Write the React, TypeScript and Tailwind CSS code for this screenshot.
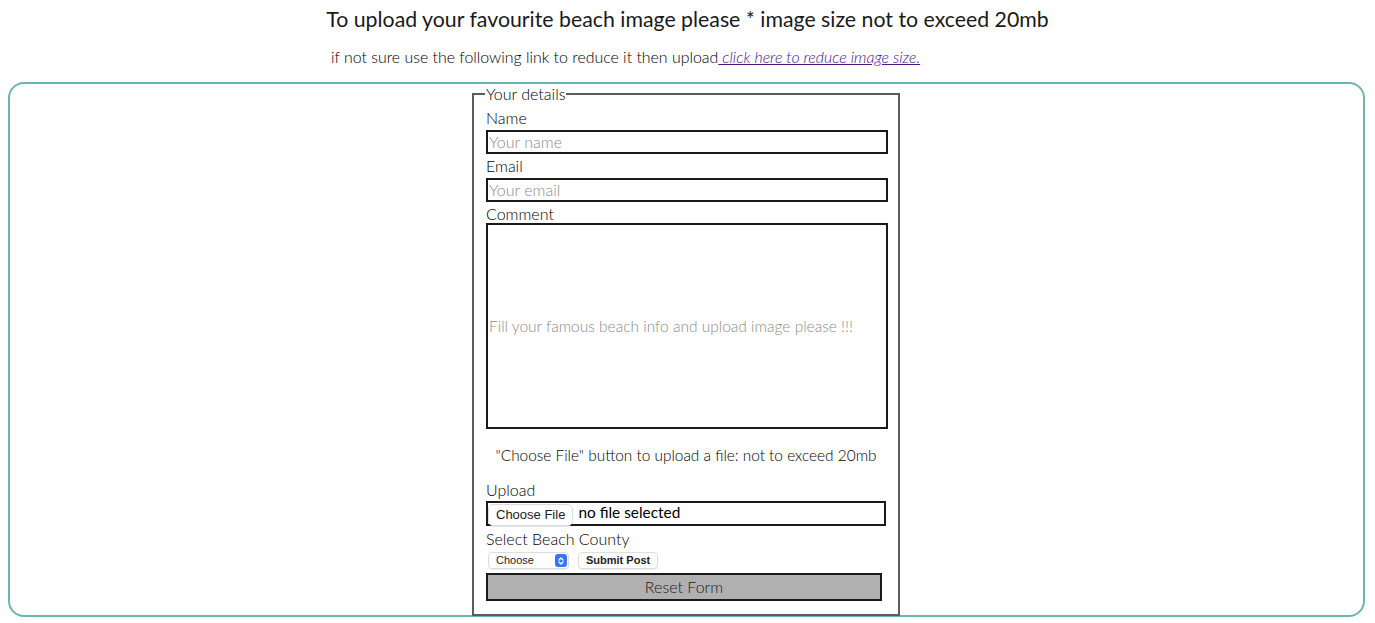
import React from "react";

export default function App() {
  const font = { fontFamily: "Lato, 'Open Sans', sans-serif" };
  const sys = { fontFamily: "'Helvetica Neue', 'Liberation Sans', Arial, sans-serif" };
  return (
    <div className="w-[1375px] h-[623px] bg-white text-[#111] overflow-hidden" style={font}>
      <h1 className="text-[21.3px] leading-[26px] text-center pt-[6px] text-[#1a1a1a]">
        To upload your favourite beach image please * image size not to exceed 20mb
      </h1>
      <p className="text-[15.9px] leading-[20px] font-light mt-[15px] ml-[331px] text-black">
        if not sure use the following link to reduce it then upload
        <a href="#" className="italic underline text-[#4b1583]"> click here to reduce image size.</a>
      </p>
      <div className="ml-[8px] mr-[10px] mt-[15px] h-[535px] border-2 border-[#6fb3b0] rounded-[16px] flex">
        <fieldset className="ml-[462px] w-[428px] h-[531px] mt-[1px] border-2 border-[#5c5c5c] pl-[12px] pr-[10px] font-light text-[16px] text-black">
          <legend className="px-[1px] -ml-[1px] leading-[18px] text-black">Your details</legend>
          <div className="leading-[24px] mt-[3px]">Name</div>
          <input
            placeholder="Your name"
            className="block w-[402px] h-[24px] border-2 border-[#1a1a1a] px-[1px] text-[16px] font-light placeholder:text-[#8c8c8c] outline-none"
          />
          <div className="leading-[24px]">Email</div>
          <input
            placeholder="Your email"
            className="block w-[402px] h-[24px] border-2 border-[#1a1a1a] px-[1px] text-[16px] font-light placeholder:text-[#8c8c8c] outline-none"
          />
          <div className="leading-[24px] -mb-[3px]">Comment</div>
          <input
            placeholder="Fill your famous beach info and upload image please !!!"
            className="block w-[402px] h-[206px] border-2 border-[#1a1a1a] px-[1px] text-[15.5px] font-light placeholder:text-[#8c8c8c] outline-none"
          />
          <p className="text-center text-[15.4px] leading-[20px] mt-[16px] text-black pr-[2px]">
            "Choose File" button to upload a file: not to exceed 20mb
          </p>
          <div className="leading-[20px] mt-[15px]">Upload</div>
          <div className="w-[400px] h-[25px] mt-[1px] border-2 border-[#1a1a1a] flex items-center">
            <span
              className="h-[22px] mt-[3px] px-[7px] flex items-center bg-white border border-[#ddd] rounded-[5px] shadow-[0_1px_1px_rgba(0,0,0,0.1)] text-[13px] font-medium text-[#222]"
              style={sys}
            >
              Choose File
            </span>
            <span className="ml-[5px] text-[15.4px] font-normal -mt-[2px]">no file selected</span>
          </div>
          <div className="leading-[20px] mt-[3px]">Select Beach County</div>
          <div className="flex items-center gap-[9px] mt-[3px] ml-[2px]">
            <div
              className="w-[81px] h-[17px] rounded-[4px] border border-[#ddd] shadow-[0_1px_1px_rgba(0,0,0,0.08)] flex items-center justify-between pl-[7px] pr-[1px] text-[11px] text-[#222] font-medium"
              style={sys}
            >
              <span>Choose</span>
              <span className="w-[12px] h-[13px] rounded-[3px] bg-[#3478f6] flex items-center justify-center">
                <svg width="8" height="10" viewBox="0 0 8 10" fill="none">
                  <path d="M2 4 L4 2 L6 4" stroke="white" strokeWidth="1.3" strokeLinecap="round" strokeLinejoin="round" />
                  <path d="M2 6 L4 8 L6 6" stroke="white" strokeWidth="1.3" strokeLinecap="round" strokeLinejoin="round" />
                </svg>
              </span>
            </div>
            <div
              className="h-[17px] px-[7px] rounded-[4px] border border-[#ddd] shadow-[0_1px_1px_rgba(0,0,0,0.08)] flex items-center text-[11px] font-bold text-[#222]"
              style={sys}
            >
              Submit Post
            </div>
          </div>
          <div className="w-[396px] h-[28px] mt-[4px] bg-[#b0b0b0] border-2 border-[#1a1a1a] flex items-center justify-center text-[16px] font-light text-[#222]">
            Reset Form
          </div>
        </fieldset>
      </div>
    </div>
  );
}
